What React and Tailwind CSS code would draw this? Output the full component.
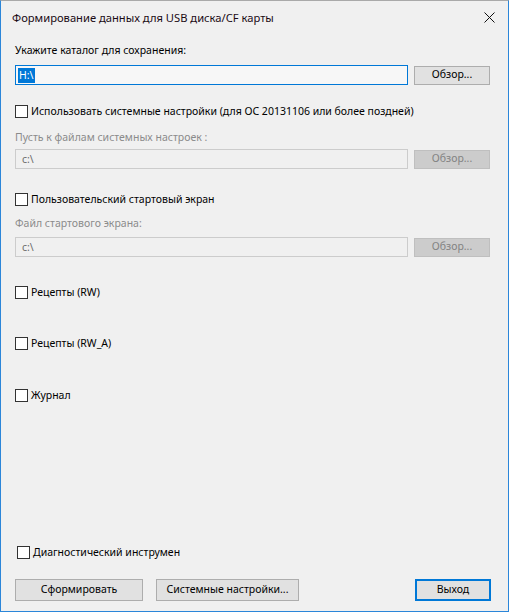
import React from "react";

const font = { fontFamily: '"Noto Sans", "Liberation Sans", sans-serif' };

const CheckRow = ({label, className = ""}) => (
	<div className={`flex items-center h-[16px] ${className}`}>
		<span className="w-[13px] h-[13px] border border-[#333333] bg-white shrink-0" />
		<span className="ml-[3px] text-[#000000] leading-[16px]">{label}</span>
	</div>
);

const PathRow = ({value, disabled, selected, className = ""}) => (
	<div className={`flex items-center ${className}`}>
		<div
			className={`w-[393px] h-[20px] flex items-center px-[2px] border ${
				disabled ? "border-[#cccccc] bg-[#f0f0f0] text-[#6d6d6d]" : "border-[#0078d7] bg-[#f7f7f7]"
			}`}
		>
			{selected ? (
				<span className="bg-[#0078d7] text-white leading-[15px] px-[1px]">{value}</span>
			) : (
				<span className="leading-[15px] pl-[4px]">{value}</span>
			)}
		</div>
		<button
			className={`ml-[6px] w-[76px] h-[19px] border flex items-center justify-center ${
				disabled ? "border-[#bfbfbf] bg-[#cccccc] text-[#838383]" : "border-[#adadad] bg-[#e1e1e1] text-black"
			}`}
		>
			Обзор...
		</button>
	</div>
);

export default function App() {
	return (
		<div
			style={font}
			className="w-[509px] h-[612px] bg-[#f0f0f0] border border-[#2b86d9] border-t-[#a9a9a9] flex flex-col text-[10.5px] text-black overflow-hidden"
		>
			<div className="h-[33px] flex items-center justify-between pl-[11px] pr-[12px] shrink-0">
				<span className="text-[11.2px] text-[#1a0a14] leading-[16px]">Формирование данных для USB диска/CF карты</span>
				<svg width="11" height="11" viewBox="0 0 11 11" className="mr-[1px]">
					<path d="M0.5 0.5 L10.5 10.5 M10.5 0.5 L0.5 10.5" stroke="#111" strokeWidth="1" />
				</svg>
			</div>

			<div className="flex-1 flex flex-col px-[14px] pb-[10px]">
				<div className="mt-[8px] leading-[16px]">Укажите каталог для сохранения:</div>
				<PathRow value="H:\" selected className="mt-[7px]" />

				<CheckRow label="Использовать системные настройки (для ОС 20131106 или более поздней)" className="mt-[18px]" />
				<div className="mt-[10px] leading-[16px] text-[#8b8b8b]">Пусть к файлам системных настроек :</div>
				<PathRow value="c:\" disabled className="mt-[4px]" />

				<CheckRow label="Пользовательский стартовый экран" className="mt-[22px]" />
				<div className="mt-[8px] leading-[16px] text-[#8b8b8b]">Файл стартового экрана:</div>
				<PathRow value="c:\" disabled className="mt-[6px]" />

				<CheckRow label="Рецепты (RW)" className="mt-[27px]" />
				<CheckRow label="Рецепты (RW_A)" className="mt-[35px]" />
				<CheckRow label="Журнал" className="mt-[36px]" />

				<div className="flex-1" />

				<CheckRow label="Диагностический инструмен" className="ml-[2px]" />
				<div className="mt-[19px] flex items-center">
					<button className="w-[128px] h-[22px] border border-[#adadad] bg-[#e1e1e1] flex items-center justify-center">
						Сформировать
					</button>
					<button className="ml-[13px] w-[143px] h-[22px] border border-[#adadad] bg-[#e1e1e1] flex items-center justify-center">
						Системные настройки...
					</button>
					<div className="flex-1" />
					<button className="mr-[3px] w-[76px] h-[22px] border-2 border-[#0078d7] bg-[#e1e1e1] flex items-center justify-center">
						Выход
					</button>
				</div>
			</div>
		</div>
	);
}
